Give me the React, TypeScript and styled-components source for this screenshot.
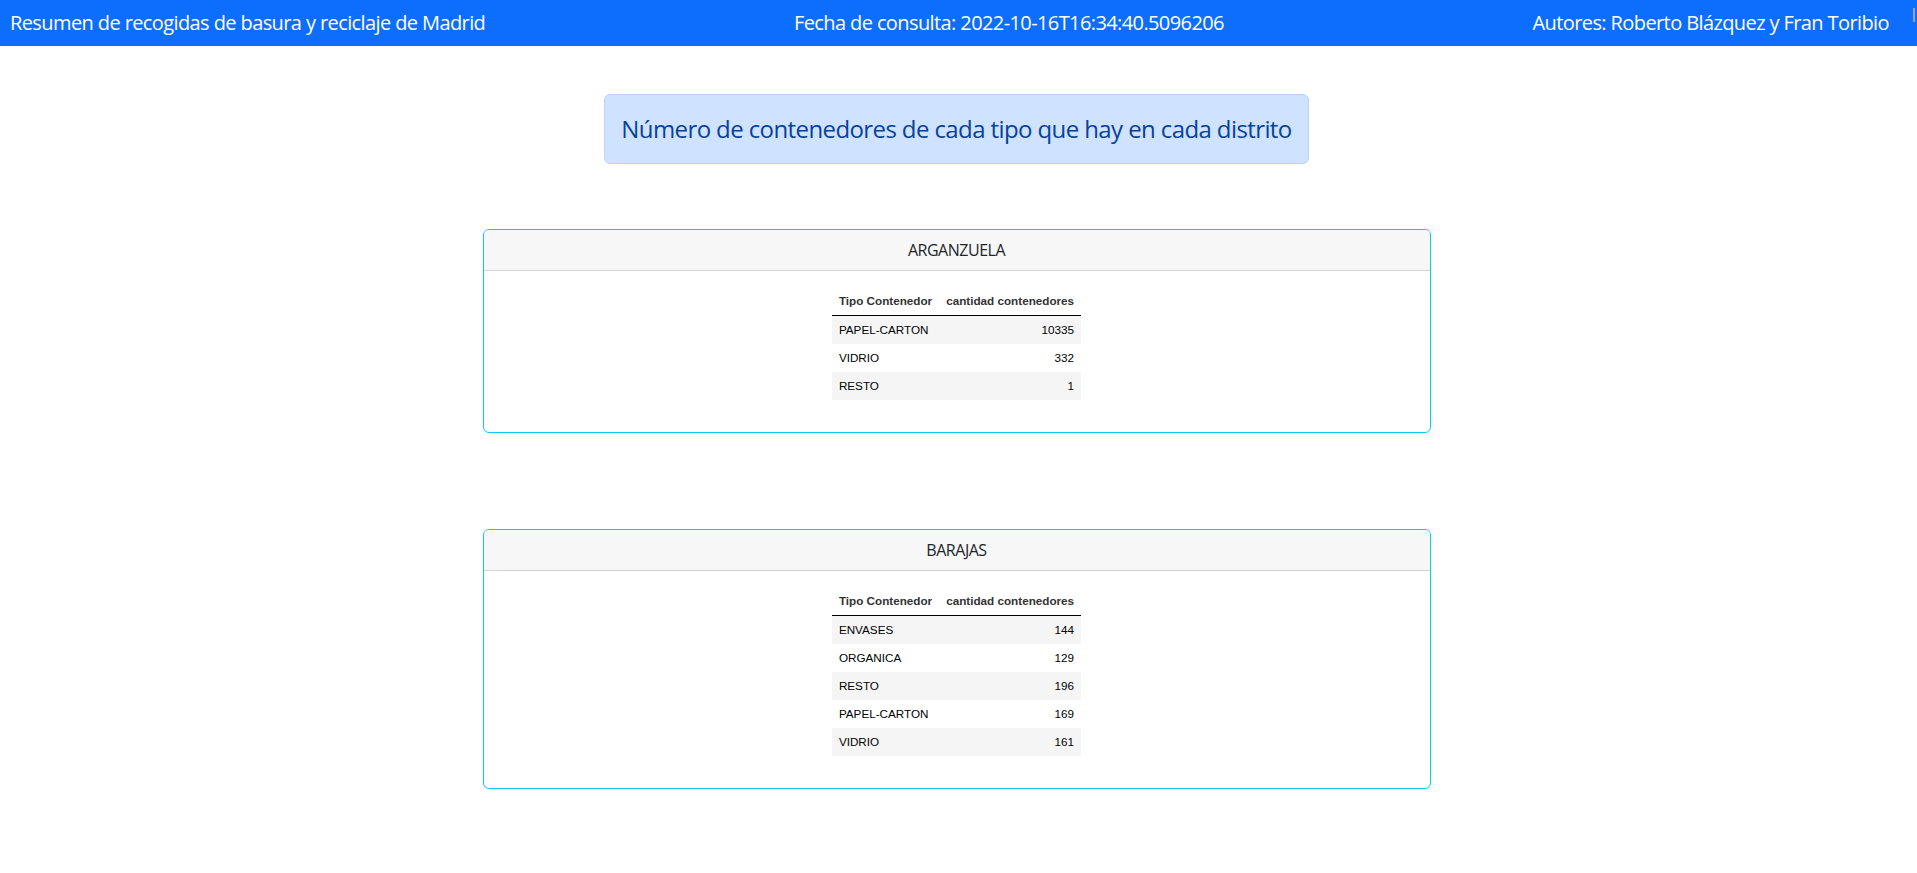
import React from "react";
import styled, { createGlobalStyle } from "styled-components";

const GlobalStyle = createGlobalStyle`
  html, body { margin: 0; padding: 0; background: #ffffff; }
  body {
    font-family: "Open Sans", "Noto Sans", sans-serif;
    color: #212529;
  }
  * { box-sizing: border-box; }
`;

const Navbar = styled.header`
  position: relative;
  display: flex;
  justify-content: space-between;
  align-items: center;
  height: 46px;
  padding: 0 28px 0 10px;
  background: #0d6efd;
  color: #ffffff;
  font-size: 20px;
  line-height: 30px;
  letter-spacing: -0.03em;
`;

const NavText = styled.span`
  white-space: nowrap;
`;

const ScrollMark = styled.span`
  position: absolute;
  top: 8px;
  right: 2px;
  width: 2px;
  height: 14px;
  background: #9aa3b5;
`;

const Main = styled.main`
  display: flex;
  flex-direction: column;
  align-items: center;
  padding: 48px 4px 84px 0;
`;

const Title = styled.div`
  padding: 16px;
  margin-bottom: 65px;
  border: 1px solid #b6d4fe;
  border-radius: 6px;
  background: #cfe2ff;
  color: #084298;
  font-size: 24px;
  line-height: 36px;
  letter-spacing: -0.025em;
  white-space: nowrap;
`;

const Card = styled.section`
  width: 948px;
  border: 1px solid #0dcaf0;
  border-radius: 6px;
  overflow: hidden;
  background: #ffffff;

  & + & {
    margin-top: 96px;
  }
`;

const CardHeader = styled.div`
  padding: 8px 16px;
  background: #f7f7f7;
  border-bottom: 1px solid #d3d3d3;
  text-align: center;
  font-size: 16px;
  line-height: 24px;
  letter-spacing: -0.03em;
  color: #212529;
`;

const CardBody = styled.div`
  display: flex;
  justify-content: center;
  padding: 16px;
`;

const Table = styled.table`
  border-collapse: collapse;
  margin-bottom: 16px;
  font-family: "Liberation Sans", Arial, sans-serif;
  font-size: 11.7px;
  line-height: 14px;
`;

const HeadRow = styled.tr`
  border-bottom: 1px solid #000000;
`;

const Th = styled.th<{ $align: "left" | "right" }>`
  padding: 7px;
  font-weight: bold;
  color: #333333;
  text-align: ${(p) => p.$align};
  white-space: nowrap;
`;

const Row = styled.tr`
  &:nth-child(odd) {
    background: #f5f5f5;
  }
`;

const Td = styled.td<{ $align: "left" | "right" }>`
  padding: 7px;
  color: #000000;
  text-align: ${(p) => p.$align};
  white-space: nowrap;
`;

type District = { name: string; rows: [string, number][] };

const districts: District[] = [
  {
    name: "ARGANZUELA",
    rows: [
      ["PAPEL-CARTON", 10335],
      ["VIDRIO", 332],
      ["RESTO", 1],
    ],
  },
  {
    name: "BARAJAS",
    rows: [
      ["ENVASES", 144],
      ["ORGANICA", 129],
      ["RESTO", 196],
      ["PAPEL-CARTON", 169],
      ["VIDRIO", 161],
    ],
  },
];

export default function App() {
  return (
    <>
      <GlobalStyle />
      <Navbar>
        <NavText>Resumen de recogidas de basura y reciclaje de Madrid</NavText>
        <NavText>Fecha de consulta: 2022-10-16T16:34:40.5096206</NavText>
        <NavText>Autores: Roberto Blázquez y Fran Toribio</NavText>
        <ScrollMark />
      </Navbar>
      <Main>
        <Title>Número de contenedores de cada tipo que hay en cada distrito</Title>
        {districts.map((d) => (
          <Card key={d.name}>
            <CardHeader>{d.name}</CardHeader>
            <CardBody>
              <Table>
                <thead>
                  <HeadRow>
                    <Th $align="left">Tipo Contenedor</Th>
                    <Th $align="right">cantidad contenedores</Th>
                  </HeadRow>
                </thead>
                <tbody>
                  {d.rows.map(([tipo, n]) => (
                    <Row key={tipo}>
                      <Td $align="left">{tipo}</Td>
                      <Td $align="right">{n}</Td>
                    </Row>
                  ))}
                </tbody>
              </Table>
            </CardBody>
          </Card>
        ))}
      </Main>
    </>
  );
}
